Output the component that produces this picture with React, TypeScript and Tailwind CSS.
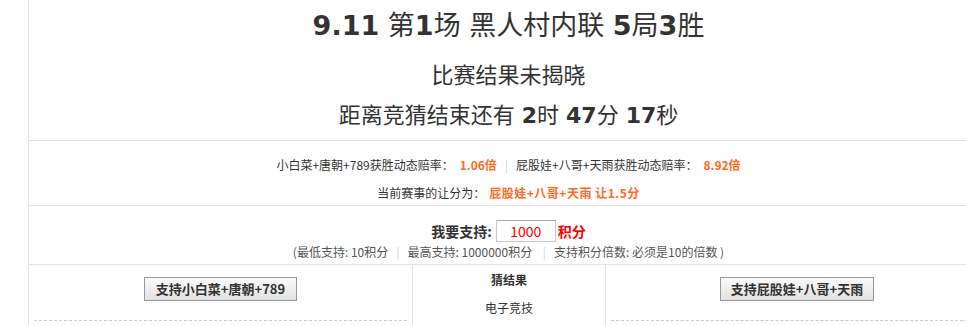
import React from "react";

const cjk = "font-['Noto_Sans_CJK_SC','Noto_Sans',sans-serif]";

function Sep() {
  return <span className="mx-[8px] text-[#d0d0d0]">|</span>;
}

export default function App() {
  return (
    <div className="w-[966px] h-[325px] overflow-hidden bg-white">
      <div className={`ml-[28px] w-[960px] border-l border-[#e3e3e3] text-[#333] ${cjk}`}>
        {/* Row 1 */}
        <div className="h-[141px] flex flex-col items-center border-b border-[#e3e3e3]">
          <div className="mt-[10px] leading-[32px] text-[27px] font-['DejaVu_Sans','Noto_Sans_CJK_SC',sans-serif] text-[#333] whitespace-nowrap">
            <b>9.11</b> 第<b>1</b>场 黑人村内联 <b>5</b>局<b>3</b>胜
          </div>
          <div className="mt-[16px] leading-[30px] text-[22px] text-[#333] whitespace-nowrap">比赛结果未揭晓</div>
          <div className="mt-[13px] leading-[30px] text-[22px] font-['DejaVu_Sans','Noto_Sans_CJK_SC',sans-serif] text-[#333] whitespace-nowrap">
            距离竞猜结束还有 <b>2</b>时 <b>47</b>分 <b>17</b>秒
          </div>
        </div>
        {/* Row 2 */}
        <div className="h-[65px] border-b border-[#e3e3e3] flex flex-col items-center pt-[14px] text-[12px] text-[#333]">
          <div className="leading-[20px] whitespace-nowrap">
            小白菜+唐朝+789获胜动态赔率：
            <span className="ml-[6px] font-bold text-[#ff6a1f]">1.06倍</span>
            <Sep />
            屁股娃+八哥+天雨获胜动态赔率：
            <span className="ml-[6px] font-bold text-[#ff6a1f]">8.92倍</span>
          </div>
          <div className="mt-[8px] leading-[20px] whitespace-nowrap">
            当前赛事的让分为：
            <span className="ml-[4px] font-bold text-[#ff6a1f] tracking-[0.5px]">屁股娃+八哥+天雨 让1.5分</span>
          </div>
        </div>
        {/* Row 3 */}
        <div className="h-[59px] border-b border-[#e3e3e3] flex flex-col items-center pt-[14px]">
          <div className="h-[22px] flex items-center whitespace-nowrap">
            <span className="text-[14px] font-bold text-[#333]">我要支持:</span>
            <div className="ml-[4px] w-[60px] h-[22px] border border-[#c8c8c8] border-t-[#a8a8a8] flex items-center justify-center text-[14px] text-[#ff0000]">
              1000
            </div>
            <span className="ml-[2px] text-[14px] font-bold text-[#ff0000]">积分</span>
          </div>
          <div className="mt-[2px] leading-[16px] text-[12px] text-[#555] whitespace-nowrap">
            (最低支持: 10积分<Sep />最高支持: 1000000积分 <Sep />支持积分倍数: 必须是10的倍数 )
          </div>
        </div>
        {/* Row 4 */}
        <div className="flex h-[60px]">
          <div className="w-[384px] border-r border-[#e3e3e3]">
            <div className="mx-[5px] h-[56px] border-b border-dashed border-[#c8c8c8] flex justify-center pt-[12px]">
              <div className="h-[24px] px-[11px] border border-[#9a9a9a] bg-gradient-to-b from-[#fafafa] to-[#e2e2e2] flex items-center text-[13px] font-bold text-[#333] whitespace-nowrap">
                支持小白菜+唐朝+789
              </div>
            </div>
          </div>
          <div className="w-[193px] border-r border-[#e3e3e3] flex flex-col items-center pt-[5px] text-[12px] text-[#333]">
            <div className="leading-[20px] font-bold">猜结果</div>
            <div className="mt-[8px] leading-[20px]">电子竞技</div>
          </div>
          <div className="flex-1">
            <div className="mx-[5px] h-[56px] border-b border-dashed border-[#c8c8c8] flex justify-center pt-[12px]">
              <div className="h-[24px] px-[10px] border border-[#9a9a9a] bg-gradient-to-b from-[#fafafa] to-[#e2e2e2] flex items-center text-[13px] font-bold text-[#333] whitespace-nowrap">
                支持屁股娃+八哥+天雨
              </div>
            </div>
          </div>
        </div>
      </div>
    </div>
  );
}
